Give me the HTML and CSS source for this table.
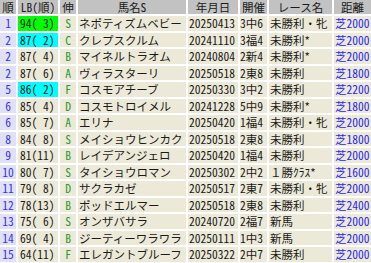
FILE: index.html
```html
<!DOCTYPE html>
<html lang="ja">
<head>
<meta charset="utf-8">
<link rel="stylesheet" href="styles.css">
</head>
<body>
<div class="wrap">
<table class="grid">
<colgroup>
<col class="c-no"><col class="c-lb"><col class="c-nobi"><col class="c-name"><col class="c-date"><col class="c-kai"><col class="c-race"><col class="c-dist">
</colgroup>
<thead>
<tr><th>順</th><th>LB(順)</th><th>伸</th><th>馬名S</th><th>年月日</th><th>開催</th><th>レース名</th><th>距離</th></tr>
</thead>
<tbody>
<tr><td class="no">1</td><td class="lb first">94( 3)</td><td class="nobi">S</td><td class="name">ネポティズムベビー</td><td class="num">20250413</td><td class="kai">3中6</td><td class="race">未勝利・牝</td><td class="dist">芝2000</td></tr>
<tr><td class="no">2</td><td class="lb second">87( 2)</td><td class="nobi">C</td><td class="name">クレプスクルム</td><td class="num">20241110</td><td class="kai">3福4</td><td class="race">未勝利*</td><td class="dist">芝2000</td></tr>
<tr><td class="no">2</td><td class="lb">87( 4)</td><td class="nobi">B</td><td class="name">マイネルトラオム</td><td class="num">20240804</td><td class="kai">2新4</td><td class="race">未勝利*</td><td class="dist">芝2000</td></tr>
<tr><td class="no">2</td><td class="lb">87( 6)</td><td class="nobi">A</td><td class="name">ヴィラスターリ</td><td class="num">20250518</td><td class="kai">2東8</td><td class="race">未勝利</td><td class="dist">芝1800</td></tr>
<tr><td class="no">5</td><td class="lb second">86( 2)</td><td class="nobi">F</td><td class="name">コスモアチーブ</td><td class="num">20250330</td><td class="kai">3中2</td><td class="race">未勝利</td><td class="dist">芝2200</td></tr>
<tr><td class="no">6</td><td class="lb">85( 4)</td><td class="nobi">D</td><td class="name">コスモトロイメル</td><td class="num">20241228</td><td class="kai">5中9</td><td class="race">未勝利*</td><td class="dist">芝1800</td></tr>
<tr><td class="no">6</td><td class="lb">85( 7)</td><td class="nobi">A</td><td class="name">エリナ</td><td class="num">20250420</td><td class="kai">1福4</td><td class="race">未勝利・牝</td><td class="dist">芝2000</td></tr>
<tr><td class="no">8</td><td class="lb">84( 8)</td><td class="nobi">S</td><td class="name">メイショウヒンカク</td><td class="num">20250518</td><td class="kai">2東8</td><td class="race">未勝利</td><td class="dist">芝1800</td></tr>
<tr><td class="no">9</td><td class="lb">81(11)</td><td class="nobi">B</td><td class="name">レイデアンジェロ</td><td class="num">20250420</td><td class="kai">1福4</td><td class="race">未勝利</td><td class="dist">芝2000</td></tr>
<tr><td class="no">10</td><td class="lb">80( 7)</td><td class="nobi">S</td><td class="name">タイショウロマン</td><td class="num">20250302</td><td class="kai">2中2</td><td class="race">１勝ｸﾗｽ*</td><td class="dist">芝1600</td></tr>
<tr><td class="no">11</td><td class="lb">79( 8)</td><td class="nobi">D</td><td class="name">サクラカゼ</td><td class="num">20250517</td><td class="kai">2東7</td><td class="race">未勝利・牝</td><td class="dist">芝2000</td></tr>
<tr><td class="no">12</td><td class="lb">78(13)</td><td class="nobi">B</td><td class="name">ポッドエルマー</td><td class="num">20250518</td><td class="kai">2東8</td><td class="race">未勝利</td><td class="dist">芝2400</td></tr>
<tr><td class="no">13</td><td class="lb">75( 6)</td><td class="nobi">S</td><td class="name">オンザバサラ</td><td class="num">20240720</td><td class="kai">2福7</td><td class="race">新馬</td><td class="dist">芝2000</td></tr>
<tr><td class="no">14</td><td class="lb">69( 4)</td><td class="nobi">B</td><td class="name">ジーティーワラワラ</td><td class="num">20250111</td><td class="kai">1中3</td><td class="race">新馬</td><td class="dist">芝2000</td></tr>
<tr><td class="no">15</td><td class="lb">64(11)</td><td class="nobi">F</td><td class="name">エレガントブルーフ</td><td class="num">20250322</td><td class="kai">2中7</td><td class="race">未勝利</td><td class="dist">芝2000</td></tr>
</tbody>
</table>
</div>
</body>
</html>
```

FILE: styles.css
```css
html, body {
  margin: 0;
  padding: 0;
  background: #ffffff;
  overflow: hidden;
}

.wrap {
  width: 371px;
  height: 263px;
  overflow: hidden;
}

.grid {
  table-layout: fixed;
  width: 375px;
  border-collapse: separate;
  border-spacing: 2px;
  margin: -2px 0 0 -2px;
  font-family: "Noto Sans CJK JP", sans-serif;
  font-size: 11.5px;
  color: #1a1a1a;
}

.c-no { width: 16px; }
.c-lb { width: 40px; }
.c-nobi { width: 16px; }
.c-name { width: 108px; }
.c-date { width: 50px; }
.c-kai { width: 27px; }
.c-race { width: 63px; }
.c-dist { width: 37px; }

.grid th {
  background: #c2c2c2;
  height: 13px;
  line-height: 14px;
  padding: 0;
  font-weight: normal;
  text-align: center;
  white-space: nowrap;
  font-feature-settings: "hwid" 1;
}

.grid td {
  background: #ece9d8;
  height: 14.5px;
  line-height: 14px;
  padding: 0;
  white-space: pre;
}

.grid td.no {
  background: #e0e0f6;
  color: #3636e8;
  text-align: center;
  font-feature-settings: "hwid" 1;
}

.grid td.lb {
  padding-left: 2px;
  font-feature-settings: "hwid" 1;
}
.grid td.lb.first { background: #00ff00; }
.grid td.lb.second { background: #00ffff; }

.grid td.nobi {
  color: #2f9a2f;
  text-align: center;
  font-feature-settings: "hwid" 1;
}

.grid td.name { padding-left: 1px; }
.grid td.num { padding-left: 1px; font-feature-settings: "hwid" 1; }
.grid td.kai { padding-left: 0; font-feature-settings: "hwid" 1; }
.grid td.race { padding-left: 1px; }
.grid td.dist {
  padding-left: 1px;
  color: #2828f0;
  font-feature-settings: "hwid" 1;
}
```
